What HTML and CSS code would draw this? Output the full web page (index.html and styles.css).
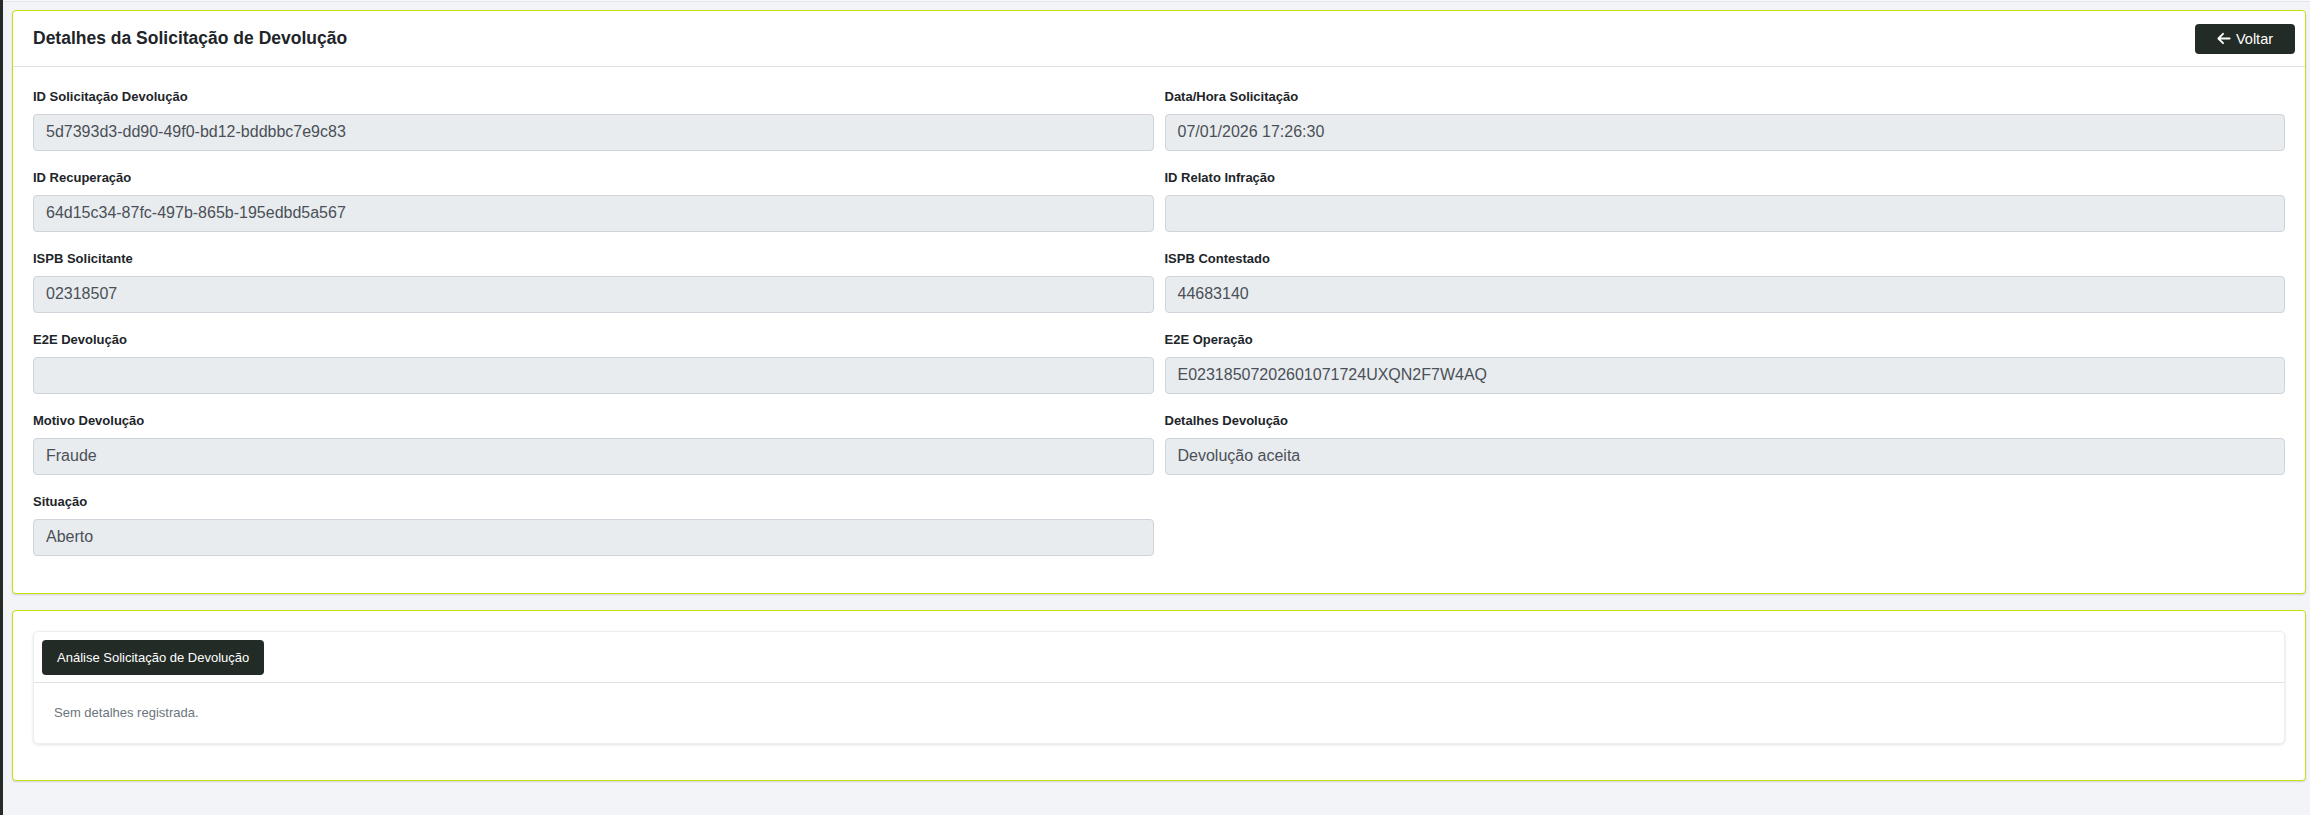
FILE: index.html
```html
<!DOCTYPE html>
<html lang="pt-BR">
<head>
<meta charset="utf-8">
<title>Detalhes da Solicitação de Devolução</title>
<link rel="stylesheet" href="styles.css">
</head>
<body>
<div class="app">
  <aside class="sidebar-edge"></aside>
  <div class="content">
    <div class="topbar-edge"></div>
    <main class="page">
      <section class="card">
        <header class="card-header">
          <h1 class="card-title">Detalhes da Solicitação de Devolução</h1>
          <button class="btn btn-dark btn-back" type="button">
            <svg class="icon-arrow" viewBox="0 0 448 512" aria-hidden="true"><path d="M9.4 233.4c-12.5 12.5-12.5 32.8 0 45.3l160 160c12.5 12.5 32.8 12.5 45.3 0s12.5-32.8 0-45.3L109.2 288 416 288c17.7 0 32-14.3 32-32s-14.3-32-32-32l-306.7 0L214.6 118.6c12.5-12.5 12.5-32.8 0-45.3s-32.8-12.5-45.3 0l-160 160z"/></svg>
            <span>Voltar</span>
          </button>
        </header>
        <div class="card-body">
          <div class="form-grid">
            <div class="field">
              <label class="field-label">ID Solicitação Devolução</label>
              <div class="field-input">5d7393d3-dd90-49f0-bd12-bddbbc7e9c83</div>
            </div>
            <div class="field">
              <label class="field-label">Data/Hora Solicitação</label>
              <div class="field-input">07/01/2026 17:26:30</div>
            </div>
            <div class="field">
              <label class="field-label">ID Recuperação</label>
              <div class="field-input">64d15c34-87fc-497b-865b-195edbd5a567</div>
            </div>
            <div class="field">
              <label class="field-label">ID Relato Infração</label>
              <div class="field-input"></div>
            </div>
            <div class="field">
              <label class="field-label">ISPB Solicitante</label>
              <div class="field-input">02318507</div>
            </div>
            <div class="field">
              <label class="field-label">ISPB Contestado</label>
              <div class="field-input">44683140</div>
            </div>
            <div class="field">
              <label class="field-label">E2E Devolução</label>
              <div class="field-input"></div>
            </div>
            <div class="field">
              <label class="field-label">E2E Operação</label>
              <div class="field-input">E02318507202601071724UXQN2F7W4AQ</div>
            </div>
            <div class="field">
              <label class="field-label">Motivo Devolução</label>
              <div class="field-input">Fraude</div>
            </div>
            <div class="field">
              <label class="field-label">Detalhes Devolução</label>
              <div class="field-input">Devolução aceita</div>
            </div>
            <div class="field">
              <label class="field-label">Situação</label>
              <div class="field-input">Aberto</div>
            </div>
          </div>
        </div>
      </section>

      <section class="card card-padded">
        <div class="inner-card">
          <div class="inner-header">
            <button class="btn btn-dark btn-tab" type="button">Análise Solicitação de Devolução</button>
          </div>
          <div class="inner-body">
            <p class="muted">Sem detalhes registrada.</p>
          </div>
        </div>
      </section>
    </main>
  </div>
</div>
</body>
</html>
```
FILE: styles.css
```css
* {
  box-sizing: border-box;
}

html, body {
  margin: 0;
  padding: 0;
  height: 100%;
}

body {
  font-family: "Liberation Sans", Arial, Helvetica, sans-serif;
  color: #212529;
  background: #f3f4f7;
}

.app {
  display: flex;
  min-height: 100vh;
}

.sidebar-edge {
  width: 3px;
  flex: none;
  background: #262d28;
}

.content {
  flex: 1;
  display: flex;
  flex-direction: column;
  min-width: 0;
}

.topbar-edge {
  height: 2px;
  background: #f8f9fb;
  border-bottom: 1px solid #e1e4e9;
}

.page {
  padding: 8px 4px 0 9px;
}

.card {
  background: #ffffff;
  border: 1px solid #c5e210;
  border-radius: 4px;
  box-shadow: 0 1px 2px rgba(0, 0, 0, 0.14);
  margin-bottom: 16px;
}

.card-header {
  height: 56px;
  display: flex;
  align-items: center;
  justify-content: space-between;
  padding: 0 10px 0 20px;
  border-bottom: 1px solid #dee2e6;
}

.card-title {
  margin: 0;
  font-size: 17.5px;
  font-weight: 700;
  color: #212529;
  line-height: 1.2;
}

.btn {
  font-family: inherit;
  border: 0;
  border-radius: 4px;
  cursor: pointer;
  display: inline-flex;
  align-items: center;
  justify-content: center;
}

.btn-dark {
  background: #232b26;
  color: #ffffff;
}

.btn-back {
  height: 30px;
  width: 100px;
  padding: 0 20px;
  font-size: 14.5px;
  gap: 5px;
}

.icon-arrow {
  width: 14px;
  height: 15px;
  fill: #ffffff;
  flex: none;
}

.card-body {
  padding: 20px;
}

.form-grid {
  display: grid;
  grid-template-columns: 1fr 1fr;
  column-gap: 11px;
}

.field {
  margin-bottom: 17px;
}

.field-label {
  display: block;
  font-size: 13px;
  font-weight: 700;
  line-height: 19.5px;
  margin-bottom: 7px;
  color: #212529;
}

.field-input {
  height: 37.5px;
  display: flex;
  align-items: center;
  padding: 0 12px;
  background: #e9ecef;
  border: 1px solid #ced4da;
  border-radius: 4px;
  font-size: 16px;
  color: #495057;
  white-space: nowrap;
}

.card-padded {
  padding: 20px;
}

.inner-card {
  background: #ffffff;
  border: 1px solid #eceef0;
  border-radius: 5px;
  box-shadow: 0 1px 3px rgba(0, 0, 0, 0.12);
  margin-bottom: 16px;
}

.inner-header {
  padding: 7.5px 8px;
  border-bottom: 1px solid #dee2e6;
}

.btn-tab {
  height: 35px;
  padding: 0 15px;
  font-size: 13px;
}

.inner-body {
  padding: 20px;
}

.muted {
  margin: 0;
  font-size: 13px;
  line-height: 19.5px;
  color: #6c757d;
}
```
